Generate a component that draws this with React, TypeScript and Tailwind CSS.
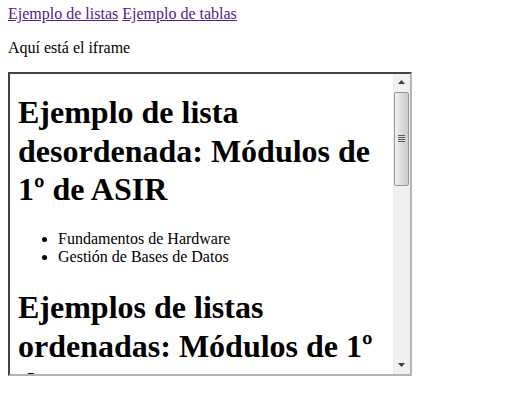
import React from "react";

export default function App() {
  return (
    <div className="px-2 pt-[5px] pb-2 font-['Liberation_Serif','Times_New_Roman',serif] text-[16px] leading-[1.15] text-black bg-white min-h-[420px]">
      <div className="h-[18.4px]">
        <a href="#" className="text-[#551a8b] underline">Ejemplo de listas</a>{" "}
        <a href="#" className="text-[#551a8b] underline">Ejemplo de tablas</a>
      </div>
      <p className="mt-4 h-[18.4px]">Aquí está el iframe</p>
      <div className="mt-[14.2px] w-[404px] h-[304px] border-2 border-t-[#444444] border-l-[#444444] border-b-[#b4b4b4] border-r-[#b4b4b4] flex bg-white">
        <div className="w-[383px] h-[300px] overflow-hidden">
          <div className="px-2">
            <h1 className="pt-[19.5px] text-[32px] font-bold leading-[1.2]">
              Ejemplo de lista desordenada: Módulos de 1º de ASIR
            </h1>
            <ul className="mt-[21.44px] list-disc pl-10">
              <li>Fundamentos de Hardware</li>
              <li>Gestión de Bases de Datos</li>
            </ul>
            <h1 className="mt-[21.44px] text-[32px] font-bold leading-[1.2]">
              Ejemplos de listas ordenadas: Módulos de 1º de ASIR
            </h1>
          </div>
        </div>
        <div className="w-[17px] h-[300px] bg-[#f0f0f0] flex flex-col items-center">
          <div className="h-[17px] w-full flex items-center justify-center">
            <svg width="7" height="4" viewBox="0 0 7 4">
              <path d="M3.5 0 L7 4 L0 4 Z" fill="#404040" />
            </svg>
          </div>
          <div className="mt-px w-[15px] h-[94px] rounded-[2px] border border-[#979797] bg-gradient-to-r from-[#f2f2f2] via-[#dcdcdc] to-[#cbcbcb] flex items-center justify-center">
            <div className="flex flex-col gap-px">
              <div className="w-[7px] h-px bg-[#5a5a5a]" />
              <div className="w-[7px] h-px bg-[#5a5a5a]" />
              <div className="w-[7px] h-px bg-[#5a5a5a]" />
              <div className="w-[7px] h-px bg-[#5a5a5a]" />
            </div>
          </div>
          <div className="flex-1" />
          <div className="h-[17px] w-full flex items-center justify-center">
            <svg width="7" height="4" viewBox="0 0 7 4">
              <path d="M0 0 L7 0 L3.5 4 Z" fill="#404040" />
            </svg>
          </div>
        </div>
      </div>
    </div>
  );
}
